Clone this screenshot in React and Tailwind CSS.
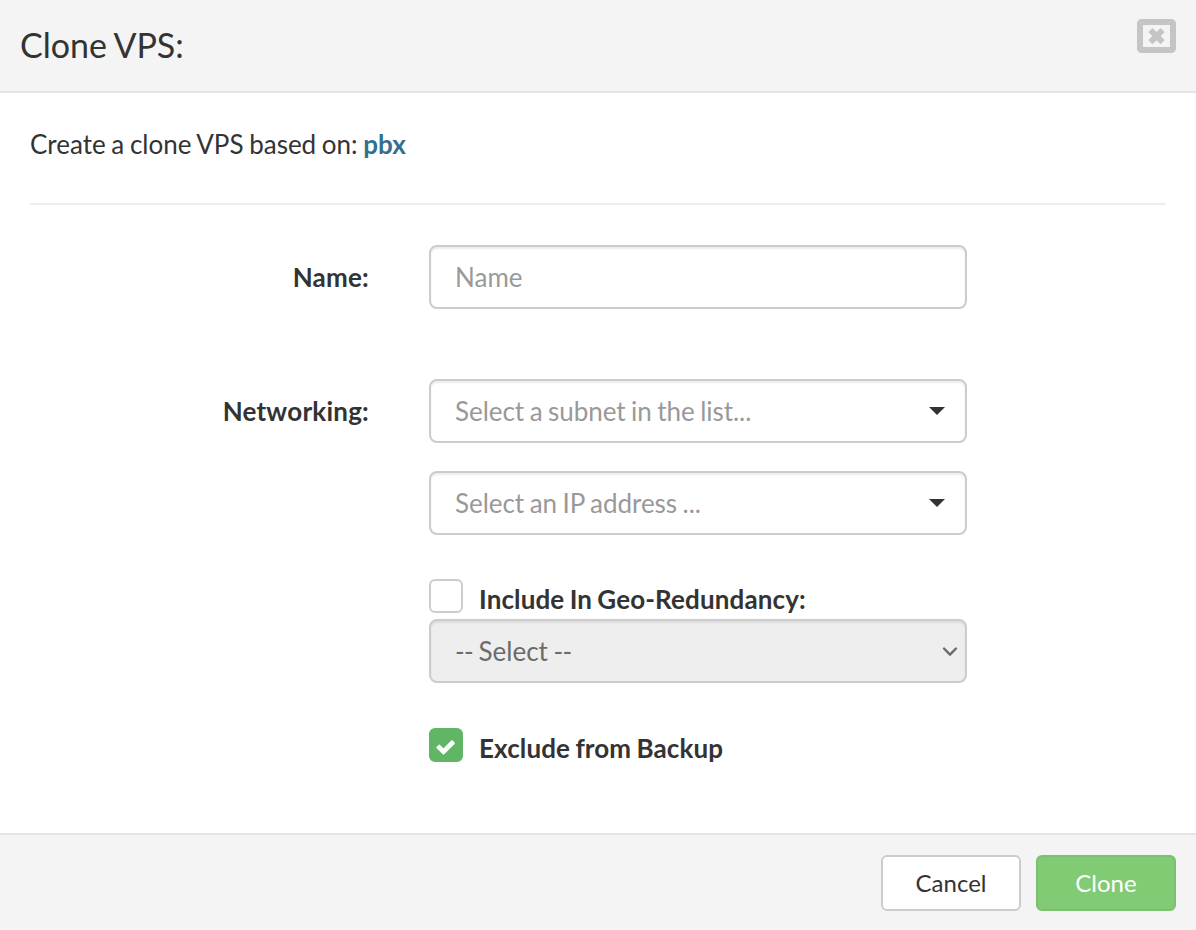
import React from "react";

const SUBNET = "Select a subnet in the list...";
const ADDRESS = "Select an IP address ...";

function FormRow ({ label, htmlFor, children }) {
	return <div className="flex">
		<label htmlFor={htmlFor} className="w-[369px] shrink-0 pt-3 text-right font-bold leading-10 tracking-[0.22px]">{label}</label>
		<div className="ml-[60px] w-[538px]">{children}</div>
	</div>
}

function Combobox ({ placeholder }) {
	return <button type="button" className="flex h-16 w-full items-center justify-between rounded-lg border-2 border-[#ccc] bg-white pl-6 pr-5 text-[#999] shadow-[inset_0_2px_2px_rgba(0,0,0,0.075)]">
		<span className="tracking-[-0.04px] [word-spacing:-1.1px]">{placeholder}</span>
		<svg width="16" height="8" viewBox="0 0 16 8" fill="#333"><path d="M0 0h16L8 8z" /></svg>
	</button>
}

function Checkbox ({ checked, children }) {
	return <label className="flex h-10 items-start">
		<span className={`flex size-[34px] items-center justify-center rounded-md border-2 ${checked ? "border-[#60b664] bg-[#60b664]" : "border-[#ccc] bg-white"}`}>
			{checked
				? <svg width="22" height="22" viewBox="0 0 22 22" fill="#fff" stroke="#fff" strokeWidth="2" strokeLinejoin="round"><path d="M8.5 19.6L2.4 13.5l1.9-1.9 4.2 4.2L17 7.3l1.9 1.9z" /></svg>
				: null
			}
		</span>
		<span className="ml-4 font-bold leading-10 tracking-[0.13px] [word-spacing:-1.2px]">{children}</span>
	</label>
}

function Header () {
	return <header className="flex h-[93px] items-start justify-between border-b-2 border-[#e5e5e5] bg-[#f4f4f4] px-5">
		<h4 className="pt-[23px] text-[34px] leading-[44px] [word-spacing:-1px]">Clone VPS:</h4>
		<button type="button" aria-label="Close" className="mt-[19px]">
			<svg width="39" height="34" viewBox="0 0 39 34" fill="none" stroke="#c5c5c5">
				<rect x="3" y="3" width="33" height="28" rx="1.5" strokeWidth="6" />
				<g fill="#c5c5c5" strokeWidth="1.6" strokeLinejoin="round" transform="translate(19.5 17.1)">
					<rect x="-7.8" y="-2.1" width="15.6" height="4.2" transform="rotate(45)" />
					<rect x="-7.8" y="-2.1" width="15.6" height="4.2" transform="rotate(-45)" />
				</g>
			</svg>
		</button>
	</header>
}

function Footer () {
	return <footer className="flex h-[97px] items-start justify-end gap-[15px] border-t-2 border-[#e5e5e5] bg-[#f4f4f4] px-5 pt-5 text-2xl">
		<button type="button" className="h-14 w-[140px] rounded-md border-2 border-[#ccc] bg-white">Cancel</button>
		<button type="button" className="h-14 w-[140px] rounded-md border-2 border-[#7bbf6f] bg-[#80cb74] text-white">Clone</button>
	</footer>
}

export default function App () {
	return <div className="flex h-[930px] w-[1196px] flex-col overflow-hidden bg-white font-['Lato',sans-serif] text-[26px] text-[#333]">
		<Header />

		<main className="flex-1">
			<div className="mx-[30px] h-[112px] border-b-2 border-[#eee] pt-8 leading-[38px] [word-spacing:-1px]">
				Create a clone VPS based on: <a className="font-bold text-[#31708f]">pbx</a>
			</div>

			<div className="flex flex-col gap-[70px] pt-10">
				<FormRow label="Name:" htmlFor="name">
					<input id="name" type="text" placeholder="Name" className="block h-16 w-full rounded-lg border-2 border-[#ccc] px-6 shadow-[inset_0_2px_2px_rgba(0,0,0,0.075)] placeholder:text-[#999]" />
				</FormRow>

				<FormRow label="Networking:">
					<div className="flex flex-col gap-7">
						<Combobox placeholder={SUBNET} />
						<Combobox placeholder={ADDRESS} />
					</div>
					<div className="mt-11">
						<Checkbox checked={false}>Include In Geo-Redundancy:</Checkbox>
						<button type="button" disabled className="flex h-16 w-full items-center justify-between rounded-lg border-2 border-[#ccc] bg-[#eee] pl-6 pr-[7px] text-[#6b6b6b] shadow-[inset_0_2px_2px_rgba(0,0,0,0.075)]">
							<span>
								<span className="tracking-[-0.6px]">--</span>
								<span className="[word-spacing:-1.2px]"> Select </span>
								<span className="tracking-[-0.6px]">--</span>
							</span>
							<svg width="16" height="12" viewBox="0 0 16 12" fill="none" stroke="#6b6b6b" strokeWidth="2.4" strokeLinecap="round" strokeLinejoin="round"><path d="M2 3.5l6 6.2 6-6.2" /></svg>
						</button>
					</div>
					<div className="mt-[45px]">
						<Checkbox checked>Exclude from Backup</Checkbox>
					</div>
				</FormRow>
			</div>
		</main>

		<Footer />
	</div>
}
